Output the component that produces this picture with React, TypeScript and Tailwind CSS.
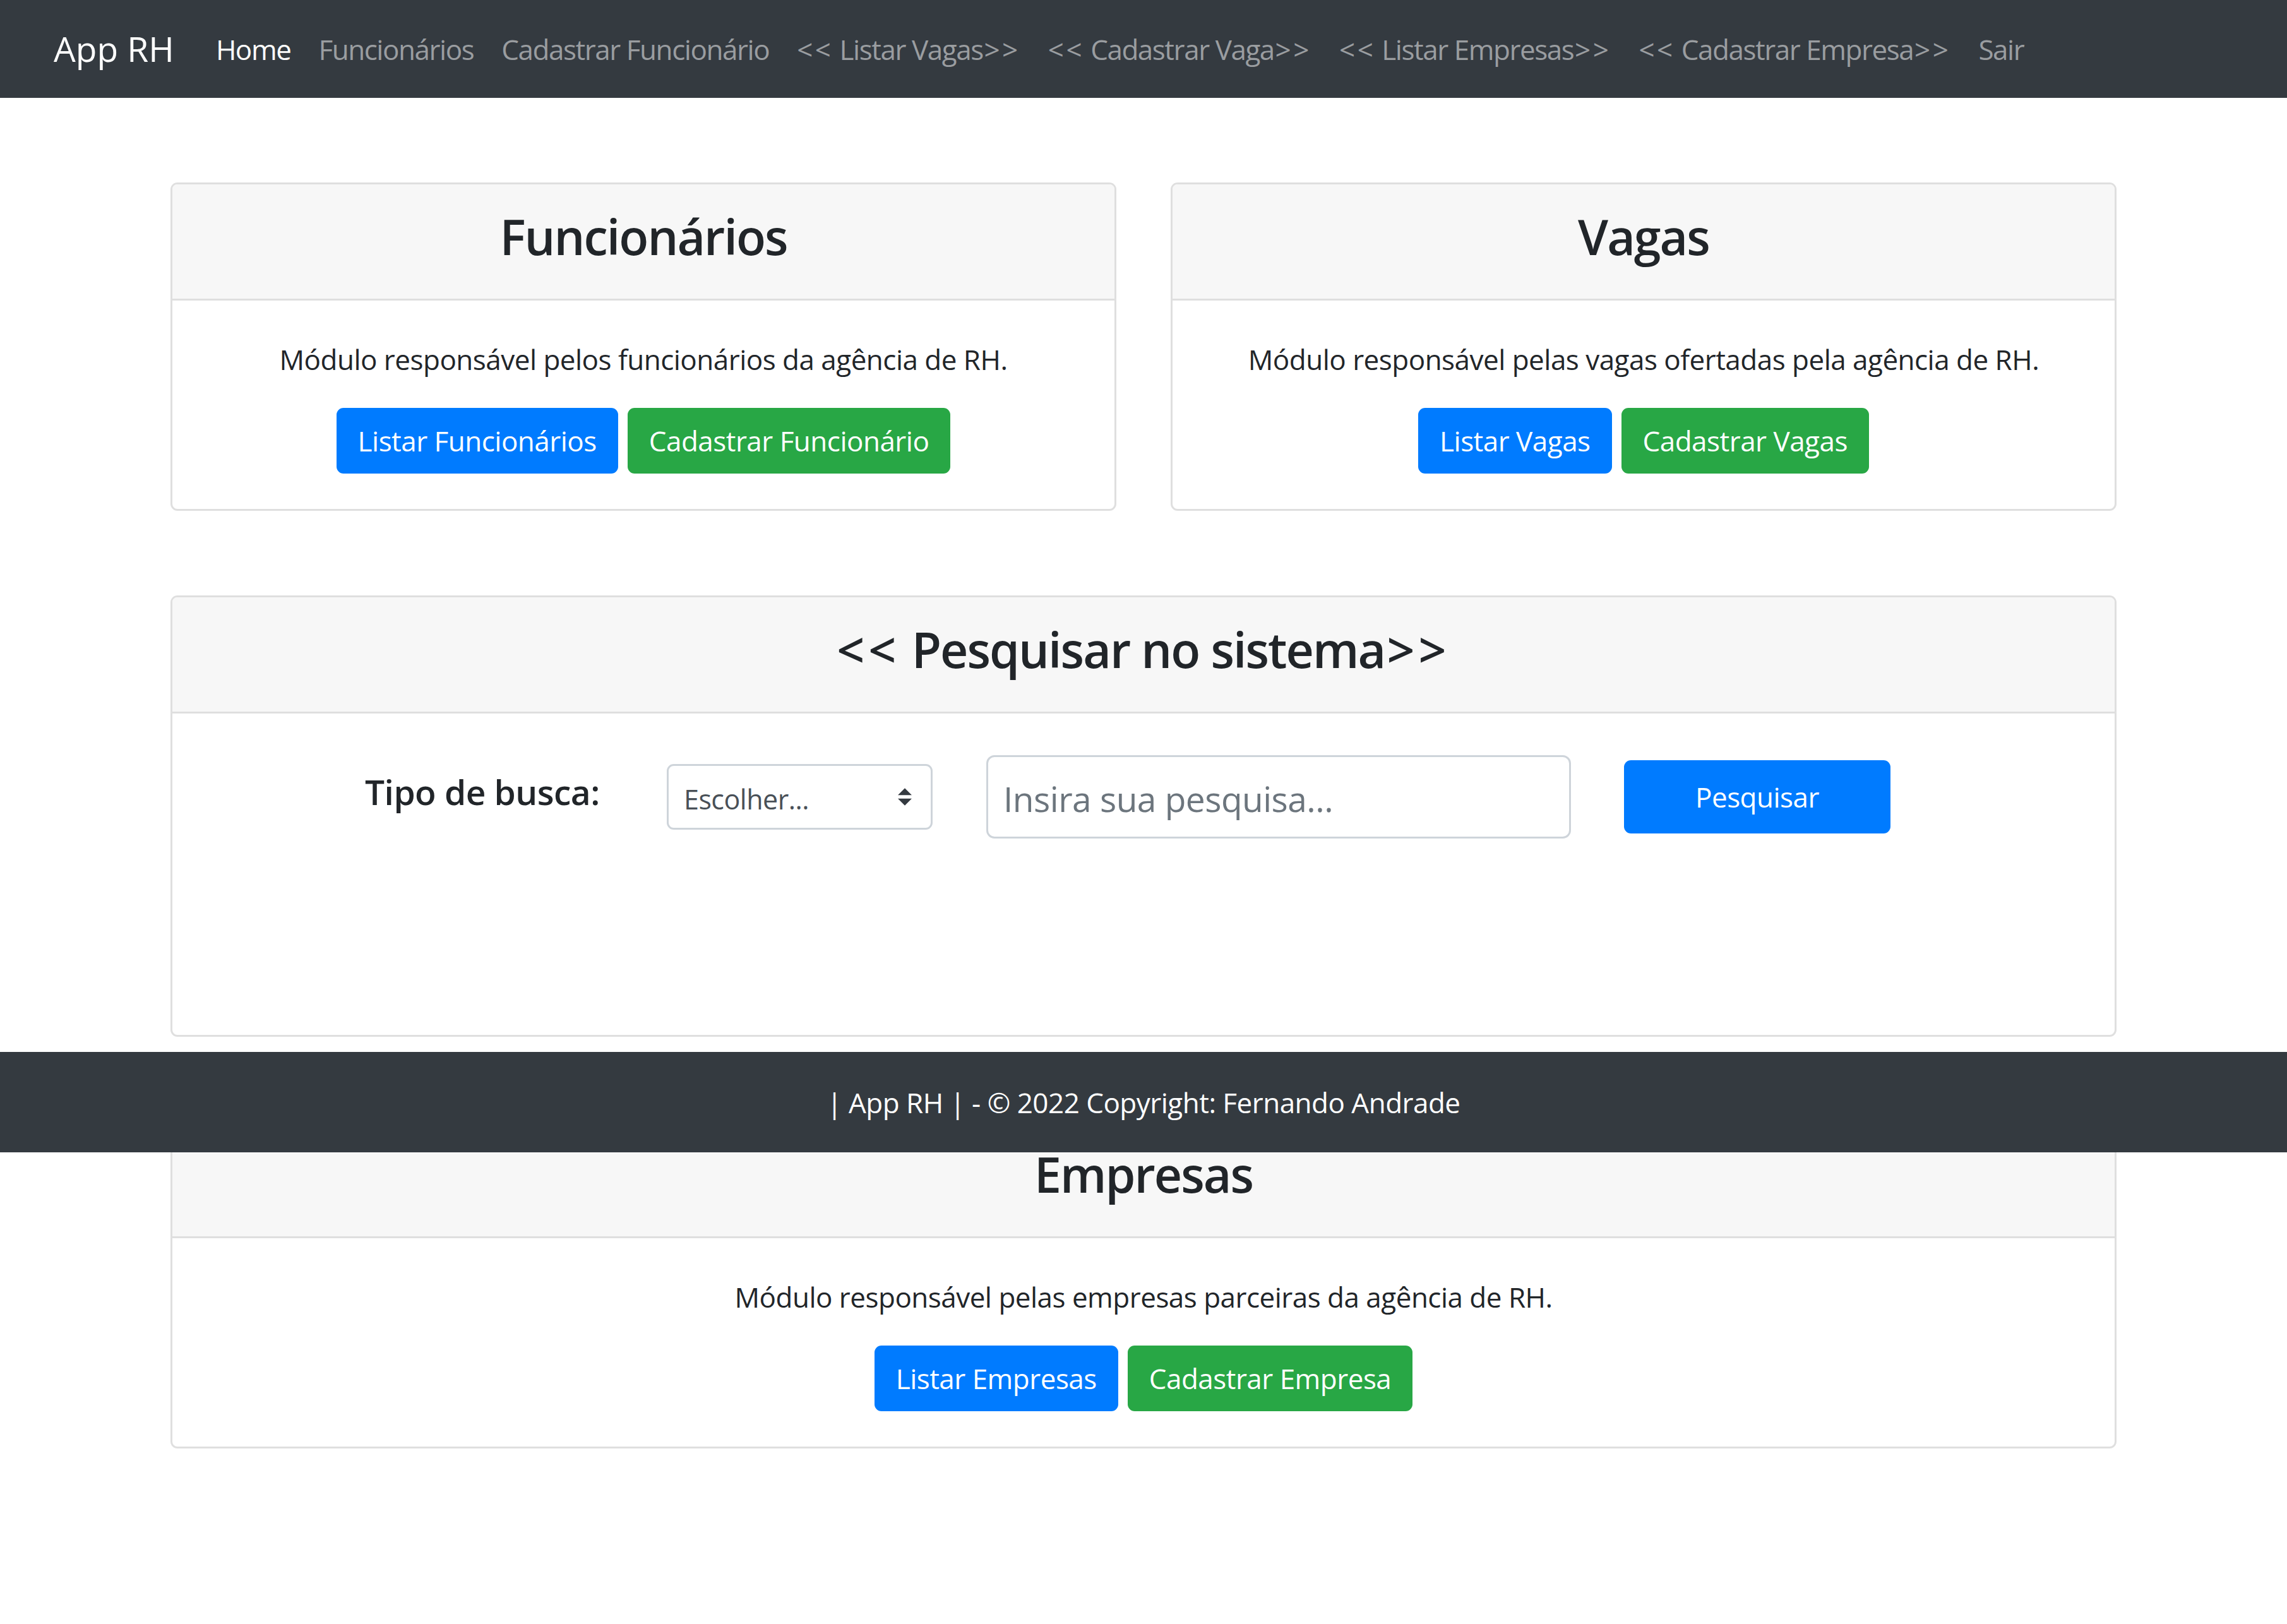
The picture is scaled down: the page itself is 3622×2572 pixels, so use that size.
import type { ReactNode } from 'react';

const navLinks = [
  'Funcionários',
  'Cadastrar Funcionário',
  '<< Listar Vagas>>',
  '<< Cadastrar Vaga>>',
  '<< Listar Empresas>>',
  '<< Cadastrar Empresa>>',
  'Sair',
];

// Segoe-style spaced angle quotes: "< <" / "> >"
function Angled({ text }: { text: string }) {
  const m = text.match(/^<< (.*)>>$/);
  if (!m) return <>{text}</>;
  return (
    <>
      <span className="tracking-[0.08em]">{'<<'}</span> {m[1]}
      <span className="tracking-[0.08em] pl-[0.04em]">{'>>'}</span>
    </>
  );
}

function Card({ title, children }: { title: string; children: ReactNode }) {
  return (
    <div className="rounded-[11px] border-[3px] border-[#dfdfdf] bg-white overflow-hidden">
      <div className="h-[184px] bg-[#f7f7f7] border-b-[3px] border-[#dfdfdf] pt-[36px] text-center">
        <h3 className="text-[77px] leading-[94px] font-semibold tracking-[-0.025em] text-[#212529]">
          <Angled text={title} />
        </h3>
      </div>
      {children}
    </div>
  );
}

function ModuleBody({ text, primary, success }: { text: string; primary: string; success: string }) {
  return (
    <div className="px-[55px] pt-[60px] pb-[56px] text-center">
      <p className="text-[44px] leading-[66px] text-[#212529] mb-[44px]">{text}</p>
      <div className="flex justify-center gap-[15px]">
        <button type="button" className="h-[104px] px-[34px] rounded-[11px] bg-[#007bff] text-white text-[44px]">
          {primary}
        </button>
        <button type="button" className="h-[104px] px-[34px] rounded-[11px] bg-[#28a745] text-white text-[44px]">
          {success}
        </button>
      </div>
    </div>
  );
}

export default function App() {
  return (
    <div className="relative min-h-[2572px] bg-white font-['Open_Sans','Noto_Sans',sans-serif] tracking-[-0.032em] text-[#212529]">
      {/* Navbar */}
      <nav className="h-[155px] bg-[#343a40] flex items-center pl-[85px]">
        <span className="text-[55px] text-white mr-[44px] tracking-normal">App RH</span>
        <ul className="flex items-center text-[44px] tracking-[-0.033em]">
          <li className="px-[22px] text-white">Home</li>
          {navLinks.map((l) => (
            <li key={l} className="px-[22px] text-[#9a9da0]">
              <Angled text={l} />
            </li>
          ))}
        </ul>
      </nav>

      <main className="w-[3082px] mx-auto pb-[200px]">
        {/* Modules */}
        <div className="grid grid-cols-2 gap-[86px] mt-[134px]">
          <Card title="Funcionários">
            <ModuleBody
              text="Módulo responsável pelos funcionários da agência de RH."
              primary="Listar Funcionários"
              success="Cadastrar Funcionário"
            />
          </Card>
          <Card title="Vagas">
            <ModuleBody
              text="Módulo responsável pelas vagas ofertadas pela agência de RH."
              primary="Listar Vagas"
              success="Cadastrar Vagas"
            />
          </Card>
        </div>

        {/* Search */}
        <div className="mt-[134px]">
          <Card title="<< Pesquisar no sistema>>">
            <div className="h-[509px] pt-[66px] pl-[305px] flex items-start">
              <div className="h-[132px] flex items-center">
                <label className="w-[478px] text-[55px] font-semibold pb-[16px]">Tipo de busca:</label>
                <div className="w-[421px] h-[104px] border-[3px] border-[#ced4da] rounded-[11px] flex items-center justify-between pl-[24px] pr-[30px]">
                  <span className="text-[43px] text-[#495057] pt-[8px]">Escolher...</span>
                  <svg width="22" height="28" viewBox="0 0 4 5">
                    <path d="M2 0L0 2h4zm0 5L0 3h4z" fill="#343a40" />
                  </svg>
                </div>
                <div className="ml-[85px] w-[926px] h-[132px] border-[3px] border-[#ced4da] rounded-[13px] flex items-center px-[24px]">
                  <span className="text-[55px] text-[#6c757d] pt-[6px]">Insira sua pesquisa...</span>
                </div>
                <button type="button" className="ml-[84px] w-[422px] h-[116px] rounded-[11px] bg-[#007bff] text-white text-[44px]">
                  Pesquisar
                </button>
              </div>
            </div>
          </Card>
        </div>

        {/* Empresas */}
        <div className="mt-[132px]">
          <Card title="Empresas">
            <ModuleBody
              text="Módulo responsável pelas empresas parceiras da agência de RH."
              primary="Listar Empresas"
              success="Cadastrar Empresa"
            />
          </Card>
        </div>
      </main>

      {/* Footer (fixed to the viewport bottom in the original) */}
      <footer className="absolute left-0 right-0 top-[1666px] h-[159px] bg-[#343a40] flex items-center justify-center">
        <span className="text-[44px] text-white">| App RH | - © 2022 Copyright: Fernando Andrade</span>
      </footer>
    </div>
  );
}
